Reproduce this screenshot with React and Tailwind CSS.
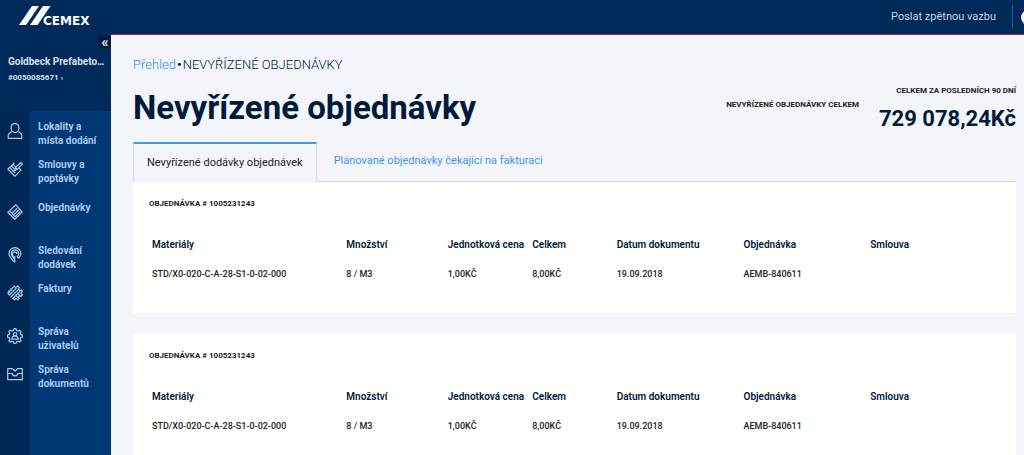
import { useState } from 'react'
import clsx from 'clsx'

const iconProps = {
  viewBox: '0 0 16 16',
  className: 'w-4 h-4',
  fill: 'none',
  stroke: 'currentColor',
  strokeWidth: 1.2,
  strokeLinejoin: 'round',
}

const UserIcon = () => (
  <svg {...iconProps}>
    <path d="M8 .7c2.300 0 3.900 1.600 3.900 4.200S10.300 9.600 8 9.600 4.100 7.500 4.100 4.900 5.700.7 8 .7z" />
    <path d="M4.900 8.700C2.300 9.600 1.200 10.800 1.200 12.800v2.500h13.600v-2.500c0-2-1.100-3.200-3.700-4.100" />
  </svg>
)

const ContractIcon = () => (
  <svg {...iconProps}>
    <path d="M7.500 1.800L.8 8.200l7.200 7 6-6-2-2" />
    <path d="M2.600 6.500l5.600 5.600M4.300 4.900l3.500 3.500M6 3.300l2.500 2.500M5.800 10.900l2-2" />
    <path d="M7.800 9.500l.6-3 5.400-5 1.600 1.600-5.300 5.300zM9 7l1.500 1.500" />
  </svg>
)

const OrderIcon = () => (
  <svg {...iconProps}>
    <path d="M9 .8L.8 8.400l7 6.900 7.400-7.200z" />
    <path d="M2.600 6.800l2.200 2.400 5.400-5.100M4.800 9.200l1.700 1.800 5.300-5.200M6.500 11l1.600 1.700 5.300-5.200" />
  </svg>
)

const TrackIcon = () => (
  <svg {...iconProps}>
    <path d="M7.800 15.300V9.600a2.400 2.400 0 1 1 2.300-2.500" />
    <path d="M7.800 15.300C5 12.800 2 9.800 2 6.500A5.900 5.900 0 0 1 13.800 6.500c0 1.700-.8 3.200-1.900 4.600l-1.800-1" />
    <path d="M7.800 12.200C5.600 10.300 4.200 8.600 4.200 6.500a3.700 3.700 0 0 1 7.400 0c0 1.300-.6 2.500-1.500 3.600" />
  </svg>
)

const InvoiceIcon = () => (
  <svg {...iconProps}>
    <path d="M7 .8l1.800 1.800L10.500 1l1.800 1.800-1 1.200 1.800 1.800 1.300-1 .9 1.700-1.500 1.700 1.500 1.800-1.500 1.500-1.200-1-1.600 1.600 1.200 1.200-1.600 1.600-1.600-1.500-1.500 1.500-1.700-1.700" />
    <path d="M.7 8l6.300-6.300M1.800 10.500l7.600-7.400M3.600 12.200l7.600-7.400M5.300 13.900l7.800-7.600M.7 8l2 2M1 5.600l2 2M3 3.600l2 2M11.200 9l2 2M9.400 10.800l2 2" />
  </svg>
)

const TeamIcon = () => (
  <svg {...iconProps}>
    <path d="M6.500 2.500L7 .7h2l.5 1.800 1.600.7 1.700-1 1.300 1.400-.9 1.600.6 1.500 1.700.5v1.900l-1.700.5-.6 1.500.9 1.700-1.400 1.300-1.600-.9-1.600.7-.5 1.600H7l-.5-1.600-1.600-.7-1.700.9-1.300-1.300.9-1.700-.6-1.500-1.700-.5V7.200l1.700-.5.6-1.500-.9-1.700 1.400-1.300 1.600.9z" />
    <circle cx="8" cy="6.200" r="1.700" />
    <path d="M4.800 11.200c0-1.800 1-2.700 2.200-3h2c1.200.3 2.200 1.200 2.200 3z" />
  </svg>
)

const DocumentIcon = () => (
  <svg {...iconProps}>
    <path d="M5.500 2.700H.7v11h14.600v-11h-4.800L8 5z" />
    <path d="M.7 7.500h4.500c.4 1.600 1.300 2.400 2.800 2.400s2.400-.8 2.800-2.400h4.500" />
  </svg>
)

const navGroups = [
  [
    { label: 'Lokality a místa dodání', Icon: UserIcon },
    { label: 'Smlouvy a poptávky', Icon: ContractIcon },
  ],
  [{ label: 'Objednávky', Icon: OrderIcon }],
  [
    { label: 'Sledování dodávek', Icon: TrackIcon },
    { label: 'Faktury', Icon: InvoiceIcon },
  ],
  [
    { label: 'Správa uživatelů', Icon: TeamIcon },
    { label: 'Správa dokumentů', Icon: DocumentIcon },
  ],
]

const tabs = ['Nevyřízené dodávky objednávek', 'Plánované objednávky čekající na fakturaci']

const columns = [
  { title: 'Materiály', width: 'w-[23%]' },
  { title: 'Množství', width: 'w-[12%]' },
  { title: 'Jednotková cena', width: 'w-[10%]' },
  { title: 'Celkem', width: 'w-[10%]' },
  { title: 'Datum dokumentu', width: 'w-[15%]' },
  { title: 'Objednávka', width: 'w-[15%]' },
  { title: 'Smlouva', width: 'w-[15%]' },
]

const row = ['STD/X0-020-C-A-28-S1-0-02-000', '8 / M3', '1,00Kč', '8,00Kč', '19.09.2018', 'AEMB-840611', '']

const orders = [
  { id: 1, number: '1005231243', rows: [row] },
  { id: 2, number: '1005231243', rows: [row] },
]

function Logo() {
  return (
    <svg viewBox="0 0 76 24" className="w-[76px] h-6 text-white" fill="currentColor" role="img" aria-label="CEMEX">
      <path d="M13 1h7L7 20H0z" />
      <path d="M24 1h7.500L18.500 20H11z" />
      <text x="24" y="20" fontSize="12" fontWeight="700" fontFamily="DejaVu Sans, sans-serif">
        CEMEX
      </text>
    </svg>
  )
}

function Header() {
  return (
    <header className="h-[34px] shrink-0 bg-[#002a59] pl-[19px] flex items-center justify-between overflow-hidden">
      <a href="#">
        <Logo />
      </a>
      <div className="flex items-center">
        <a href="#" className="text-[11px] text-[#c3d3e8]">
          Poslat zpětnou vazbu
        </a>
        <span className="ml-4 w-px h-6 bg-[#33547b]" />
        <button aria-label="Účet" className="ml-2 -mr-3 w-[15px] h-[15px] rounded-full bg-white" />
      </div>
    </header>
  )
}

function Sidebar() {
  return (
    <aside className="w-[111px] shrink-0 bg-[#002a59] flex flex-col">
      <div className="h-[77px] shrink-0">
        <div className="flex justify-end pt-0.5">
          <button aria-label="Sbalit menu" className="w-3 h-3 bg-[#001a3a] text-white text-[14px] leading-[10px] font-bold">
            «
          </button>
        </div>
        <div className="pl-2 pt-1.5 text-[#d5e2f2] whitespace-nowrap">
          <p className="text-[10px] leading-4 font-bold">Goldbeck Prefabeto…</p>
          <a href="#" className="text-[8px] leading-4 font-bold block">
            #0050085671 ›
          </a>
        </div>
      </div>
      <nav className="grow bg-linear-to-r from-[#002856] from-[30px] to-[#003876] to-[30px] pt-[9px] flex flex-col gap-[5px]">
        {navGroups.map((group, i) => (
          <ul key={i}>
            {group.map(({ label, Icon }) => (
              <li key={label}>
                <a href="#" className="h-[38px] flex text-[#a9c9ee]">
                  <span className="w-[30px] shrink-0 flex justify-center pt-[3px]">
                    <Icon />
                  </span>
                  <span className="w-[68px] ml-2 text-[10px] leading-[14px] font-bold">{label}</span>
                </a>
              </li>
            ))}
          </ul>
        ))}
      </nav>
    </aside>
  )
}

function OrderCard({ order }) {
  return (
    <section className="bg-white px-4 pt-4 pb-6">
      <h2 className="text-[8px] leading-3 font-bold text-[#222]">OBJEDNÁVKA # {order.number}</h2>
      <div className="px-[3px] pt-[18px]">
        <table className="w-full table-fixed text-left whitespace-nowrap">
          <thead>
            <tr className="h-8 text-[10px] text-[#001b3a]">
              {columns.map((c) => (
                <th key={c.title} className={clsx('p-0 font-semibold', c.width)}>
                  {c.title}
                </th>
              ))}
            </tr>
          </thead>
          <tbody>
            {order.rows.map((cells, i) => (
              <tr key={i} className="h-[29px] text-[9px] font-medium uppercase text-[#222]">
                {cells.map((cell, j) => (
                  <td key={j} className="p-0">
                    {cell}
                  </td>
                ))}
              </tr>
            ))}
          </tbody>
        </table>
      </div>
    </section>
  )
}

export default function App() {
  const [active, setActive] = useState(0)

  return (
    <div className="h-screen flex flex-col overflow-hidden bg-[#f4f5fa] font-[Roboto,sans-serif]">
      <Header />
      <div className="flex grow min-h-0">
        <Sidebar />
        <main className="grow min-w-0 border-t border-[#a3203c] pl-[22px] pr-2 overflow-hidden">
          <p className="pt-5 text-[13px] leading-5 font-light text-[#001b3a]">
            <a href="#" className="text-[#2f8de4]">
              Přehled
            </a>
            <span className="mx-px font-bold">•</span>
            NEVYŘÍZENÉ OBJEDNÁVKY
          </p>

          <div className="flex justify-between h-[67px] pt-[10px]">
            <h1 className="text-[33px] leading-[46px] font-bold text-[#001b3a]">Nevyřízené objednávky</h1>
            <div className="flex gap-5 text-[8px] leading-3 font-bold text-[#222]">
              <p className="pt-[14px]">NEVYŘÍZENÉ OBJEDNÁVKY CELKEM</p>
              <div className="text-right">
                <p>CELKEM ZA POSLEDNÍCH 90 DNÍ</p>
                <p className="pt-1.5 text-[22px] leading-8 text-[#001b3a]">729 078,24Kč</p>
              </div>
            </div>
          </div>

          <div role="tablist" className="flex h-10 border-b border-[#d5d7dc]">
            {tabs.map((tab, i) => (
              <button
                key={tab}
                role="tab"
                aria-selected={active === i}
                onClick={() => setActive(i)}
                className={clsx(
                  'text-[11px] border-x cursor-pointer',
                  active === i
                    ? 'h-10 px-[13px] bg-[#f4f5fa] text-[#222] border-x-[#d5d7dc] border-t-2 border-t-[#3d9be9]'
                    : 'px-4 text-[#3d96e6] border-transparent'
                )}
              >
                {tab}
              </button>
            ))}
          </div>

          <div className="flex flex-col gap-[21px]">
            {orders.map((order) => (
              <OrderCard key={order.id} order={order} />
            ))}
          </div>
        </main>
      </div>
    </div>
  )
}
